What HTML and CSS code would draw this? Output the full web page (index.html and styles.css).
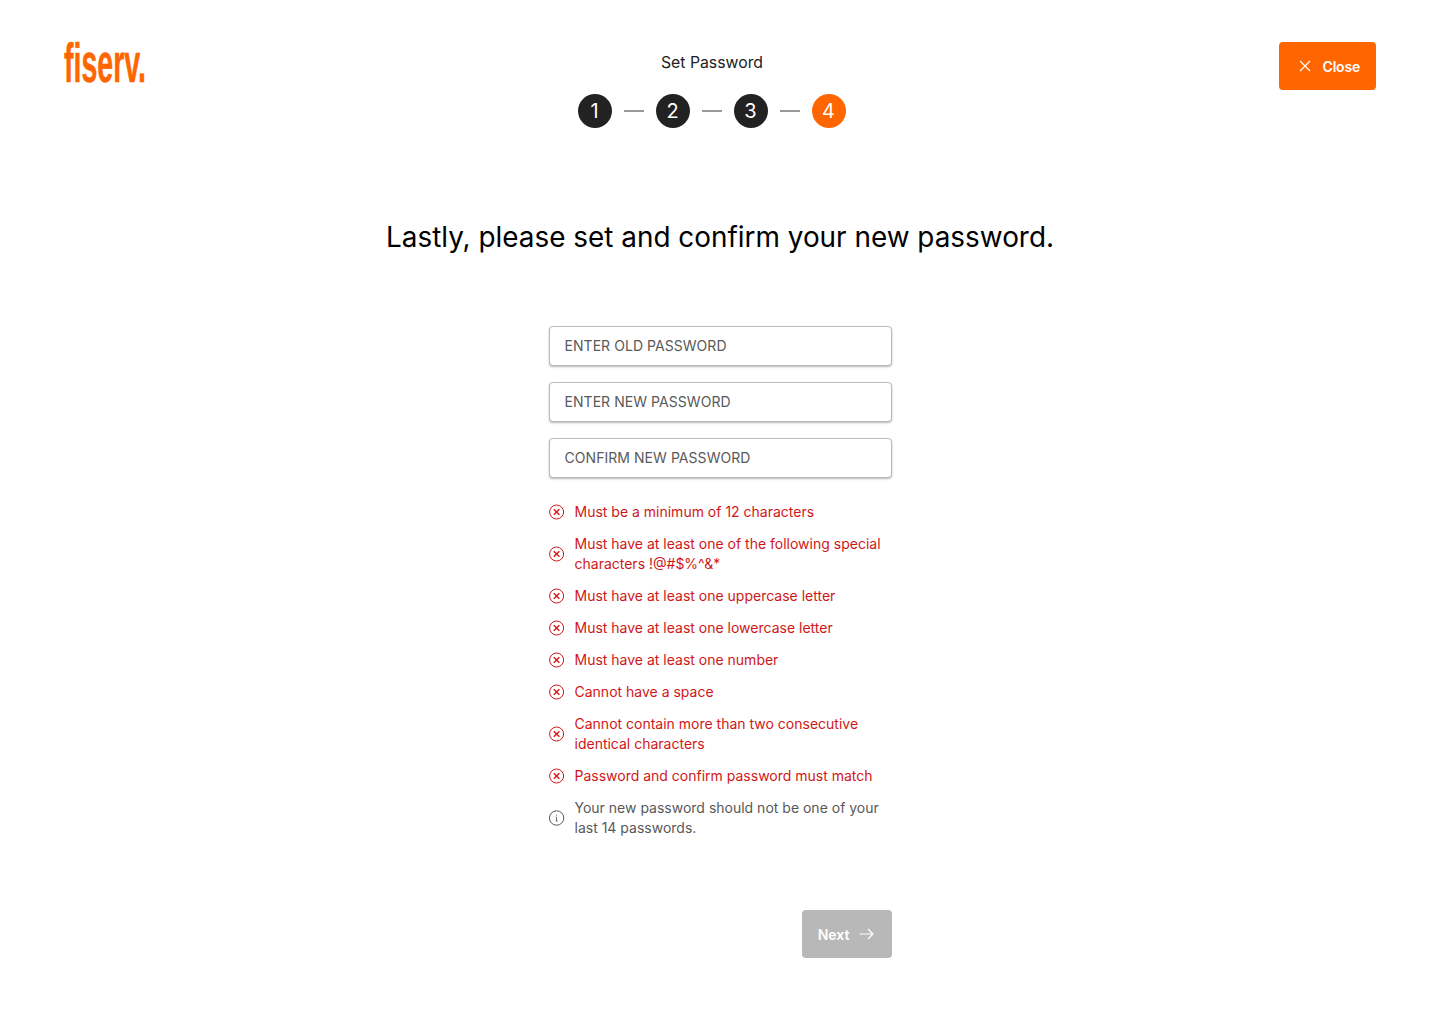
FILE: index.html
```html
<!DOCTYPE html>
<html lang="en">
<head>
    <meta charset="UTF-8">
    <meta name="viewport" content="width=device-width, initial-scale=1.0">
    <title>Set Password</title>
    <link rel="stylesheet" href="styles.css">
</head>
<body>
    <header class="top">
        <div class="logo"><span class="logo-text">fiserv.</span></div>
        <div class="progress">
            <div class="progress-title">Set Password</div>
            <div class="steps">
                <span class="step">1</span><span class="dash"></span>
                <span class="step">2</span><span class="dash"></span>
                <span class="step">3</span><span class="dash"></span>
                <span class="step current">4</span>
            </div>
        </div>
        <button class="btn btn-close" type="button">
            <svg width="16" height="16" viewBox="0 0 16 16" fill="none" stroke="currentColor" stroke-width="1.2"><path d="M3 3l10 10M13 3L3 13"/></svg>
            Close
        </button>
    </header>

    <main class="content">
        <h1>Lastly, please set and confirm your new password.</h1>

        <form class="form">
            <input class="field" type="password" placeholder="ENTER OLD PASSWORD">
            <input class="field" type="password" placeholder="ENTER NEW PASSWORD">
            <input class="field" type="password" placeholder="CONFIRM NEW PASSWORD">

            <ul class="rules">
                <li class="rule">
                    <svg class="rule-icon" viewBox="0 0 16 16" fill="none" stroke="currentColor"><circle cx="7.6" cy="8" r="7"/><path d="M4.8 5.2l5.6 5.6M10.4 5.2l-5.6 5.6" stroke-width="1.4"/></svg>
                    <span>Must be a minimum of 12 characters</span>
                </li>
                <li class="rule">
                    <svg class="rule-icon" viewBox="0 0 16 16" fill="none" stroke="currentColor"><circle cx="7.6" cy="8" r="7"/><path d="M4.8 5.2l5.6 5.6M10.4 5.2l-5.6 5.6" stroke-width="1.4"/></svg>
                    <span>Must have at least one of the following special characters !@#$%^&amp;*</span>
                </li>
                <li class="rule">
                    <svg class="rule-icon" viewBox="0 0 16 16" fill="none" stroke="currentColor"><circle cx="7.6" cy="8" r="7"/><path d="M4.8 5.2l5.6 5.6M10.4 5.2l-5.6 5.6" stroke-width="1.4"/></svg>
                    <span>Must have at least one uppercase letter</span>
                </li>
                <li class="rule">
                    <svg class="rule-icon" viewBox="0 0 16 16" fill="none" stroke="currentColor"><circle cx="7.6" cy="8" r="7"/><path d="M4.8 5.2l5.6 5.6M10.4 5.2l-5.6 5.6" stroke-width="1.4"/></svg>
                    <span>Must have at least one lowercase letter</span>
                </li>
                <li class="rule">
                    <svg class="rule-icon" viewBox="0 0 16 16" fill="none" stroke="currentColor"><circle cx="7.6" cy="8" r="7"/><path d="M4.8 5.2l5.6 5.6M10.4 5.2l-5.6 5.6" stroke-width="1.4"/></svg>
                    <span>Must have at least one number</span>
                </li>
                <li class="rule">
                    <svg class="rule-icon" viewBox="0 0 16 16" fill="none" stroke="currentColor"><circle cx="7.6" cy="8" r="7"/><path d="M4.8 5.2l5.6 5.6M10.4 5.2l-5.6 5.6" stroke-width="1.4"/></svg>
                    <span>Cannot have a space</span>
                </li>
                <li class="rule">
                    <svg class="rule-icon" viewBox="0 0 16 16" fill="none" stroke="currentColor"><circle cx="7.6" cy="8" r="7"/><path d="M4.8 5.2l5.6 5.6M10.4 5.2l-5.6 5.6" stroke-width="1.4"/></svg>
                    <span>Cannot contain more than two consecutive identical characters</span>
                </li>
                <li class="rule">
                    <svg class="rule-icon" viewBox="0 0 16 16" fill="none" stroke="currentColor"><circle cx="7.6" cy="8" r="7"/><path d="M4.8 5.2l5.6 5.6M10.4 5.2l-5.6 5.6" stroke-width="1.4"/></svg>
                    <span>Password and confirm password must match</span>
                </li>
                <li class="rule info">
                    <svg class="rule-icon" viewBox="0 0 16 16" fill="none" stroke="currentColor"><circle cx="7.6" cy="8" r="7.2"/><path d="M6.8 7.2h.8v3.9M6.8 11.1h1.6" stroke-width="0.9"/><circle cx="7.5" cy="5" r="0.6" fill="currentColor" stroke="none"/></svg>
                    <span>Your new password should not be one of your last 14 passwords.</span>
                </li>
            </ul>

            <div class="actions">
                <button class="btn btn-next" type="button" disabled>
                    Next
                    <svg width="16" height="16" viewBox="0 0 16 16" fill="none" stroke="currentColor" stroke-width="1.2"><path d="M.5 8H14M9 3l5 5-5 5"/></svg>
                </button>
            </div>
        </form>
    </main>
</body>
</html>
```

FILE: styles.css
```css
* {
    box-sizing: border-box;
}
body {
    font-family: Inter, "Liberation Sans", Arial, sans-serif;
    background-color: #fff;
    color: #000;
    margin: 0;
}
.top {
    display: flex;
    justify-content: space-between;
    align-items: flex-start;
    padding: 42px 64px 0;
}
.logo {
    width: 81px;
    height: 42px;
}
.logo-text {
    display: block;
    font-family: "Liberation Sans Narrow", "Liberation Sans", sans-serif;
    font-size: 56px;
    font-weight: 700;
    line-height: 42px;
    color: #ff6600;
    -webkit-text-stroke: 0.5px #ff6600;
    transform: scaleX(0.51);
    transform-origin: left center;
}
.progress {
    width: 269px;
    padding-top: 10px;
    text-align: center;
}
.progress-title {
    font-size: 15.8px;
    line-height: 22px;
    color: #222;
    margin-bottom: 20px;
}
.steps {
    display: flex;
    align-items: center;
    gap: 12px;
}
.step {
    width: 34px;
    height: 34px;
    border-radius: 50%;
    background-color: #222;
    color: #fff;
    font-size: 20px;
    line-height: 34px;
    text-align: center;
}
.step.current {
    background-color: #ff6600;
}
.dash {
    width: 20px;
    height: 2px;
    background-color: #999;
}
.btn {
    display: flex;
    align-items: center;
    height: 48px;
    padding: 0 16px;
    border: 0;
    border-radius: 4px;
    color: #fff;
    font-family: inherit;
    font-size: 14px;
    font-weight: 600;
    gap: 10px;
}
.btn-close {
    width: 97px;
    justify-content: flex-end;
    letter-spacing: -0.2px;
    background-color: #ff6600;
}
.btn-next {
    width: 90px;
    justify-content: center;
    background-color: #b8b8b8;
}
.content {
    display: flex;
    flex-direction: column;
    align-items: center;
}
h1 {
    font-size: 27.9px;
    font-weight: 400;
    line-height: 40px;
    margin: 89px 0 69px;
    text-align: center;
}
.form {
    width: 343px;
    display: flex;
    flex-direction: column;
    gap: 16px;
}
.field {
    width: 100%;
    height: 40px;
    padding: 0 15px 1px;
    border: 1px solid #bbb;
    border-radius: 4px;
    box-shadow: 0 1px 2px rgba(0, 0, 0, 0.3);
    font-family: inherit;
    font-size: 14px;
    letter-spacing: 0.05px;
}
.field::placeholder {
    color: #595959;
    opacity: 1;
}
.rules {
    list-style: none;
    margin: 8px 0 0;
    padding: 0;
    display: flex;
    flex-direction: column;
    gap: 12px;
}
.rule {
    display: flex;
    align-items: center;
    gap: 10px;
    color: #cf1717;
    font-size: 14px;
    line-height: 20px;
}
.rule.info {
    color: #595959;
}
.rule-icon {
    width: 16px;
    height: 16px;
    flex: none;
}
.actions {
    display: flex;
    justify-content: flex-end;
    margin-top: 56px;
}
```
